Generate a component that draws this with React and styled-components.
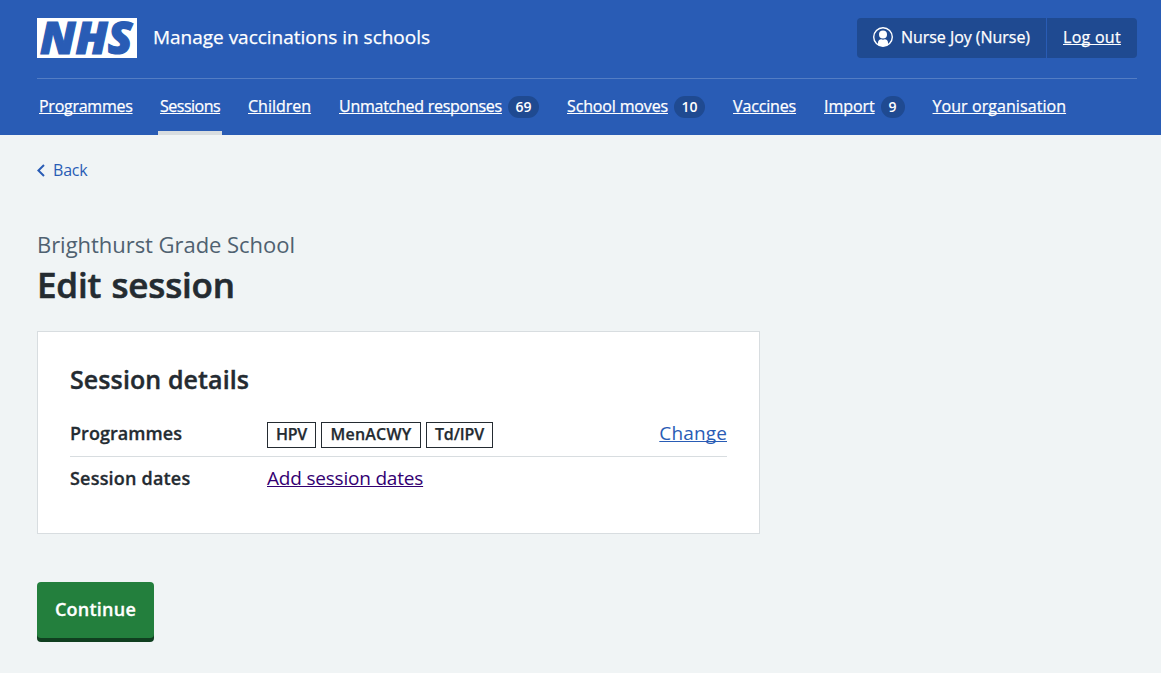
import React from "react";
import styled, { createGlobalStyle } from "styled-components";

const blue = "#295cb5";
const navy = "#1f4a91";
const ink = "#242b31";
const rule = "#d8dde0";

const GlobalStyle = createGlobalStyle`
  *, *::before, *::after { box-sizing: border-box; }
  body {
    margin: 0;
    background: #f0f4f5;
    color: ${ink};
    font-family: "Open Sans", "Noto Sans", sans-serif;
    font-size: 16px;
  }
  a { color: inherit; text-decoration-thickness: 1px; text-underline-offset: 1px; text-decoration-skip-ink: none; }
`;

const Page = styled.div`
  min-height: 673px;
`;

const Header = styled.header`
  background: ${blue};
  color: #fff;
  padding: 0 24px 0 37px;
  height: 135px;
  -webkit-text-stroke: 0.25px #fff;
`;

const TopBar = styled.div`
  display: flex;
  align-items: flex-start;
  padding-top: 18px;
  height: 79px;
  border-bottom: 1px solid #537dc4;
`;

const Logo = styled.svg`
  display: block;
  flex: none;
  width: 100px;
  height: 40px;
  overflow: visible;
  -webkit-text-stroke: 0;
`;

const LogoText = styled.text`
  fill: ${blue};
  stroke: ${blue};
  stroke-width: 1.2px;
  -webkit-text-stroke: 1.2px ${blue};
  font: italic 800 44.5px "Open Sans", "Noto Sans", sans-serif;
`;

const ServiceName = styled.a`
  margin-left: 16px;
  font-size: 19px;
  line-height: 39px;
  letter-spacing: -0.02px;
  text-decoration: none;
  white-space: nowrap;
`;

const Account = styled.div`
  display: flex;
  width: 280px;
  height: 40px;
  margin-left: auto;
  background: ${navy};
  border-radius: 4px;
  line-height: 38px;
  white-space: nowrap;
`;

const AccountUser = styled.div`
  display: flex;
  width: 190px;
  padding-left: 16px;
  border-right: 1px solid ${blue};
  letter-spacing: -0.04px;
`;

const UserIcon = styled.svg`
  flex: none;
  width: 20px;
  height: 20px;
  margin: 9px 8px 0 0;
`;

const LogOut = styled.a`
  padding-left: 16px;
  letter-spacing: 0.28px;
`;

const Nav = styled.nav`
  display: flex;
  gap: 24px;
  height: 56px;
`;

const NavItem = styled.div`
  display: flex;
  align-items: center;
  padding: 1px 2px 0;
  border-bottom: 4px solid ${(p) => (p.$current ? rule : "transparent")};
`;

const NavLink = styled.a`
  width: ${(p) => p.$width}px;
  line-height: 24px;
  letter-spacing: ${(p) => p.$tracking}px;
  white-space: nowrap;
`;

const Badge = styled.span`
  margin: 3px 0 0 6px;
  min-width: 24px;
  padding: 0 7.5px;
  height: 22px;
  border-radius: 11px;
  background: ${navy};
  font-size: 14px;
  font-weight: 600;
  line-height: 21px;
  text-align: center;
  -webkit-text-stroke: 0;
`;

const Main = styled.main`
  display: flex;
  flex-direction: column;
  align-items: flex-start;
  padding: 23px 24px 0 37px;
`;

const BackLink = styled.a`
  display: flex;
  align-items: center;
  gap: 8px;
  color: ${blue};
  line-height: 24px;
  letter-spacing: -0.2px;
  text-decoration: none;
`;

const Chevron = styled.svg`
  width: 8px;
  height: 13px;
  margin-top: 1px;
`;

const Caption = styled.div`
  margin-top: 46px;
  font-size: 22px;
  line-height: 32px;
  letter-spacing: -0.04px;
  color: #4f6170;
`;

const Title = styled.h1`
  margin: 3px 0 24px;
  font-size: 35px;
  font-weight: 600;
  line-height: 44px;
  letter-spacing: -0.2px;
  word-spacing: 1.5px;
  -webkit-text-stroke: 0.6px ${ink};
`;

const Card = styled.section`
  width: 723px;
  height: 203px;
  padding: 31px 32px 0;
  background: #fff;
  border: 1px solid ${rule};
`;

const CardTitle = styled.h2`
  margin: 0 0 17px;
  font-size: 25px;
  font-weight: 600;
  line-height: 32px;
  letter-spacing: 0.1px;
  -webkit-text-stroke: 0.4px ${ink};
`;

const SummaryRow = styled.div`
  display: grid;
  grid-template-columns: 197px 1fr auto;
  align-items: start;
  height: 45px;
  padding-top: 9px;
  font-size: 19px;
  line-height: 24px;
  border-bottom: 1px solid ${(p) => (p.$last ? "transparent" : rule)};
`;

const Key = styled.div`
  font-size: 18px;
  font-weight: 600;
  letter-spacing: ${(p) => p.$tracking}px;
  -webkit-text-stroke: 0.3px ${ink};
`;

const Tags = styled.div`
  display: flex;
  gap: 5px;
  padding-top: 1px;
`;

const Tag = styled.span`
  width: ${(p) => p.$width}px;
  height: 26px;
  border: 1px solid ${ink};
  font-size: 16px;
  font-weight: 600;
  line-height: 23px;
  text-align: center;
  letter-spacing: ${(p) => p.$tracking}px;
  -webkit-text-stroke: 0.25px ${ink};
`;

const ActionLink = styled.a`
  color: ${blue};
  letter-spacing: 0.15px;
`;

const VisitedLink = styled.a`
  color: #330072;
  letter-spacing: -0.2px;
`;

const Button = styled.button`
  margin-top: 48px;
  width: 117px;
  height: 56px;
  padding: 0 0 1px;
  border: 0;
  border-radius: 4px;
  background: #237f3d;
  box-shadow: 0 4px 0 #103f20;
  color: #fff;
  font: 600 18px/55px "Open Sans", "Noto Sans", sans-serif;
  letter-spacing: 0.25px;
  -webkit-text-stroke: 0.3px #fff;
`;

const navItems = [
  { label: "Programmes", width: 93, tracking: -0.26 },
  { label: "Sessions", width: 60, tracking: -0.5, current: true },
  { label: "Children", width: 63, tracking: 0 },
  { label: "Unmatched responses", width: 163, tracking: -0.26, count: 69 },
  { label: "School moves", width: 101, tracking: -0.15, count: 10 },
  { label: "Vaccines", width: 63, tracking: -0.15 },
  { label: "Import", width: 50.5, tracking: -0.05, count: 9 },
  { label: "Your organisation", width: 134, tracking: 0.07 },
];

const programmes = [
  { label: "HPV", width: 49, tracking: -0.25 },
  { label: "MenACWY", width: 100, tracking: 0.23 },
  { label: "Td/IPV", width: 67, tracking: -0.15 },
];

function NhsLogo() {
  return (
    <Logo viewBox="0 0 100 40" role="img" aria-label="NHS">
      <rect width="100" height="40" fill="#fff" />
      <LogoText x="3" y="35.7" textLength="92.5" lengthAdjust="spacingAndGlyphs">
        NHS
      </LogoText>
    </Logo>
  );
}

export default function App() {
  return (
    <Page>
      <GlobalStyle />
      <Header>
        <TopBar>
          <NhsLogo />
          <ServiceName href="#">Manage vaccinations in schools</ServiceName>
          <Account>
            <AccountUser>
              <UserIcon viewBox="0 0 20 20" aria-hidden="true">
                <circle cx="10" cy="10" r="9.3" fill="none" stroke="#fff" strokeWidth="1.4" />
                <circle cx="10" cy="7.6" r="4" fill="#fff" />
                <path d="M5 18V15.8C5 13.6 6.4 12.2 8.2 12.2C9.3 12.8 10.7 12.8 11.8 12.2C13.6 12.2 15 13.6 15 15.8V18C12 19.6 8 19.6 5 18Z" fill="#fff" />
              </UserIcon>
              Nurse Joy (Nurse)
            </AccountUser>
            <LogOut href="#">Log out</LogOut>
          </Account>
        </TopBar>
        <Nav>
          {navItems.map((item) => (
            <NavItem key={item.label} $current={item.current}>
              <NavLink href="#" $width={item.width} $tracking={item.tracking}>
                {item.label}
              </NavLink>
              {item.count && <Badge>{item.count}</Badge>}
            </NavItem>
          ))}
        </Nav>
      </Header>
      <Main>
        <BackLink href="#">
          <Chevron viewBox="0 0 8 13" aria-hidden="true">
            <path d="M7 1L1.4 6.5L7 12" fill="none" stroke={blue} strokeWidth="2" />
          </Chevron>
          Back
        </BackLink>
        <Caption>Brighthurst Grade School</Caption>
        <Title>Edit session</Title>
        <Card>
          <CardTitle>Session details</CardTitle>
          <SummaryRow>
            <Key $tracking={0.05}>Programmes</Key>
            <Tags>
              {programmes.map((tag) => (
                <Tag key={tag.label} $width={tag.width} $tracking={tag.tracking}>
                  {tag.label}
                </Tag>
              ))}
            </Tags>
            <ActionLink href="#">Change</ActionLink>
          </SummaryRow>
          <SummaryRow $last>
            <Key $tracking={0.2}>Session dates</Key>
            <div>
              <VisitedLink href="#">Add session dates</VisitedLink>
            </div>
          </SummaryRow>
        </Card>
        <Button type="button">Continue</Button>
      </Main>
    </Page>
  );
}
